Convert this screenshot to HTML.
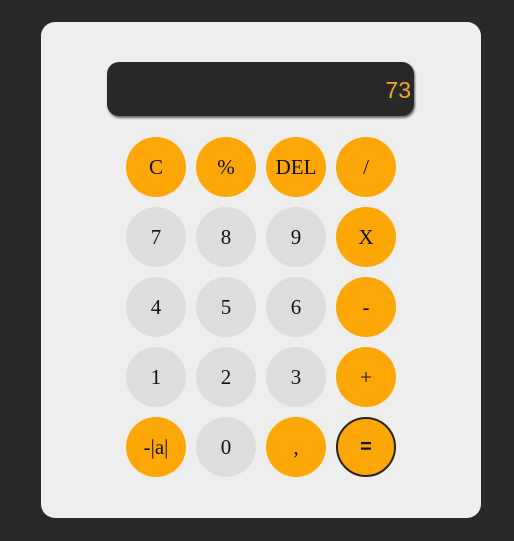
<!DOCTYPE html>
<html><head><style>
body{margin:0;width:514px;height:541px;background:#292929;position:relative;overflow:hidden}
.card{position:absolute;left:41px;top:22px;width:440px;height:496px;background:#eeeeee;border-radius:14px}
.disp{position:absolute;left:107px;top:62px;width:307px;height:54px;background:#282828;border-radius:12px;box-shadow:1px 2px 2px #666;color:#f5a623;font:23px "Liberation Sans",sans-serif;text-align:right;line-height:56px;box-sizing:border-box;padding-right:3px}
.b{position:absolute;width:60px;height:60px;border-radius:50%;background:#dddddd;font:21px "Liberation Serif",serif;color:#111;text-align:center;line-height:60px}
.o{background:#fda706}
.eq{box-sizing:border-box;border:2px solid #2a2218;font:bold 20px "Liberation Sans",sans-serif;line-height:56px}
</style></head><body>
<div class="card"></div>
<div class="disp">73</div>
<div class="b o" style="left:126px;top:137px">C</div>
<div class="b o" style="left:196px;top:137px">%</div>
<div class="b o" style="left:266px;top:137px">DEL</div>
<div class="b o" style="left:336px;top:137px">/</div>
<div class="b" style="left:126px;top:207px">7</div>
<div class="b" style="left:196px;top:207px">8</div>
<div class="b" style="left:266px;top:207px">9</div>
<div class="b o" style="left:336px;top:207px">X</div>
<div class="b" style="left:126px;top:277px">4</div>
<div class="b" style="left:196px;top:277px">5</div>
<div class="b" style="left:266px;top:277px">6</div>
<div class="b o" style="left:336px;top:277px">-</div>
<div class="b" style="left:126px;top:347px">1</div>
<div class="b" style="left:196px;top:347px">2</div>
<div class="b" style="left:266px;top:347px">3</div>
<div class="b o" style="left:336px;top:347px">+</div>
<div class="b o" style="left:126px;top:417px">-|a|</div>
<div class="b" style="left:196px;top:417px">0</div>
<div class="b o" style="left:266px;top:417px">,</div>
<div class="b o eq" style="left:336px;top:417px">=</div>
</body></html>
